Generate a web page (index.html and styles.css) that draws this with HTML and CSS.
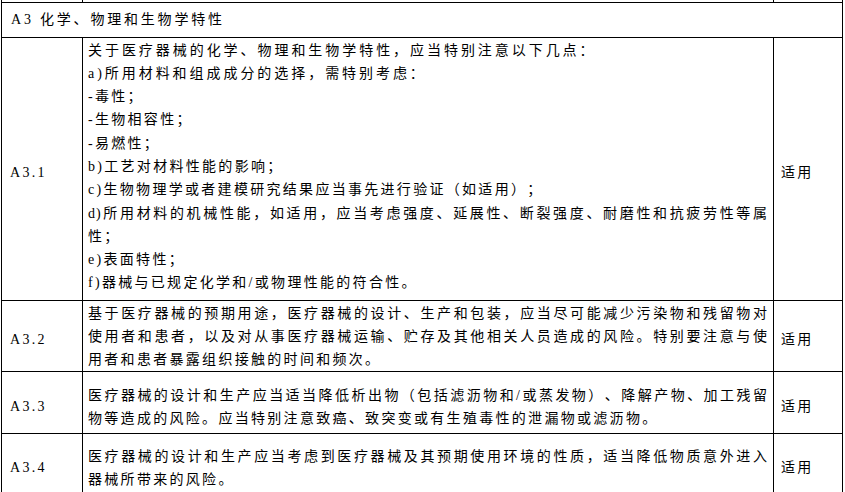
FILE: index.html
```html
<!DOCTYPE html>
<html lang="zh-CN">
<head>
<meta charset="utf-8">
<title>A3 化学、物理和生物学特性</title>
<link rel="stylesheet" href="styles.css">
</head>
<body>
<table class="sheet">
  <colgroup>
    <col class="c-id">
    <col class="c-text">
    <col class="c-app">
  </colgroup>
  <tr class="stub"><td></td><td></td><td></td></tr>
  <tr class="head"><td colspan="3" class="head-cell">A3 化学、物理和生物学特性</td></tr>
  <tr class="r1">
    <td class="id">A3.1</td>
    <td class="text top">
      <span class="ln wide">关于医疗器械的化学、物理和生物学特性，应当特别注意以下几点：</span>
      <span class="ln wide">a)所用材料和组成成分的选择，需特别考虑：</span>
      <span class="ln">-毒性；</span>
      <span class="ln">-生物相容性；</span>
      <span class="ln">-易燃性；</span>
      <span class="ln">b)工艺对材料性能的影响；</span>
      <span class="ln">c)生物物理学或者建模研究结果应当事先进行验证（如适用）；</span>
      <span class="ln j">d)所用材料的机械性能，如适用，应当考虑强度、延展性、断裂强度、耐磨性和抗疲劳性等属</span>
      <span class="ln">性；</span>
      <span class="ln">e)表面特性；</span>
      <span class="ln">f)器械与已规定化学和/或物理性能的符合性。</span>
    </td>
    <td class="app">适用</td>
  </tr>
  <tr class="r2">
    <td class="id">A3.2</td>
    <td class="text top">
      <span class="ln j">基于医疗器械的预期用途，医疗器械的设计、生产和包装，应当尽可能减少污染物和残留物对</span>
      <span class="ln j">使用者和患者，以及对从事医疗器械运输、贮存及其他相关人员造成的风险。特别要注意与使</span>
      <span class="ln">用者和患者暴露组织接触的时间和频次。</span>
    </td>
    <td class="app">适用</td>
  </tr>
  <tr class="r3">
    <td class="id">A3.3</td>
    <td class="text mid">
      <span class="ln j">医疗器械的设计和生产应当适当降低析出物（包括滤沥物和/或蒸发物）、降解产物、加工残留</span>
      <span class="ln">物等造成的风险。应当特别注意致癌、致突变或有生殖毒性的泄漏物或滤沥物。</span>
    </td>
    <td class="app">适用</td>
  </tr>
  <tr class="r4">
    <td class="id">A3.4</td>
    <td class="text mid">
      <span class="ln j">医疗器械的设计和生产应当考虑到医疗器械及其预期使用环境的性质，适当降低物质意外进入</span>
      <span class="ln">器械所带来的风险。</span>
    </td>
    <td class="app">适用</td>
  </tr>
</table>
</body>
</html>
```
FILE: styles.css
```css
html, body {
  margin: 0;
  padding: 0;
  background: #ffffff;
}

body {
  color: #000000;
  font-family: "Liberation Serif", "Noto Sans CJK SC", serif;
  font-size: 14px;
  line-height: 23.3px;
  letter-spacing: 2.3px;
  text-spacing-trim: space-all;
}

.sheet {
  border-collapse: collapse;
  table-layout: fixed;
  width: 841px;
  margin-left: 1px;
}

.c-id { width: 81px; }
.c-text { width: 691px; }
.c-app { width: 69px; }

.sheet td {
  border: 1px solid #000000;
  padding: 0;
  vertical-align: middle;
}

.sheet .stub { height: 2px; }

.sheet .stub td {
  border-top: 0;
}

.sheet .head { height: 35px; }

.sheet .head-cell {
  padding: 0 0 0 9px;
  letter-spacing: 2.8px;
}

.sheet .id {
  padding: 8px 0 0 8px;
}

.sheet .app {
  padding: 8px 0 0 7px;
}

.sheet .text {
  padding: 0 5px;
}

.sheet .text.top {
  vertical-align: top;
  padding-top: 1px;
}

.sheet .text.mid {
  padding-top: 8px;
}

.ln {
  display: block;
  white-space: nowrap;
}

.ln.wide {
  letter-spacing: 2.95px;
}

.ln.j {
  letter-spacing: 1px;
  text-align: justify;
  text-align-last: justify;
}

.sheet .r1 { height: 263px; }
.sheet .r2 { height: 71px; }
.sheet .r3 { height: 62px; }
.sheet .r4 { height: 60px; }
```
